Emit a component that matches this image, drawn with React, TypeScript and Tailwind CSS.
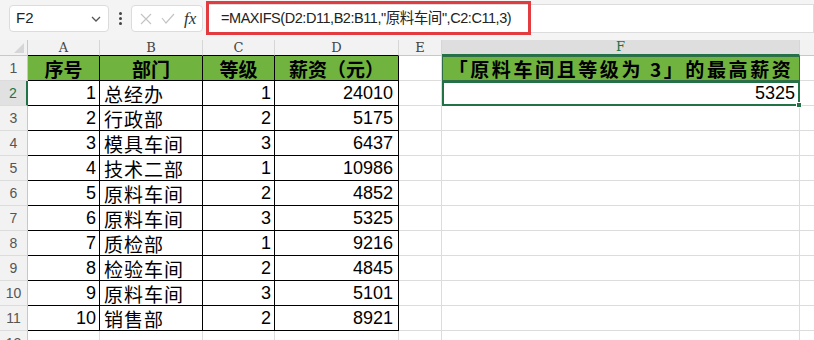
import React from "react";

const rows: [string, string, string, string][] = [
  ["1", "总经办", "1", "24010"],
  ["2", "行政部", "2", "5175"],
  ["3", "模具车间", "3", "6437"],
  ["4", "技术二部", "1", "10986"],
  ["5", "原料车间", "2", "4852"],
  ["6", "原料车间", "3", "5325"],
  ["7", "质检部", "1", "9216"],
  ["8", "检验车间", "2", "4845"],
  ["9", "原料车间", "3", "5101"],
  ["10", "销售部", "2", "8921"],
];

const CJK = { fontFamily: '"Noto Sans CJK SC", "Noto Sans", sans-serif' };
const NUM = { fontFamily: '"Liberation Sans", Arial, sans-serif' };
const HDR = { fontFamily: '"DejaVu Serif", "Liberation Serif", serif' };

function RowHead({ n, active }: { n: number; active?: boolean }) {
  return (
    <div
      className={`h-[25px] flex items-end justify-center pb-[1px] text-[14px] border-b border-[#dcdcdc] ${
        active ? "text-[#217346] bg-[#e1e1e1] border-r-2 border-r-[#217346]" : "text-[#555] bg-[#f2f2f2] border-r border-r-[#c8c8c8]"
      }`}
      style={{ fontFamily: '"Liberation Sans", sans-serif' }}
    >
      {n}
    </div>
  );
}

export default function App() {
  return (
    <div className="w-[814px] h-[340px] overflow-hidden bg-white relative">
      {/* toolbar */}
      <div className="h-[40px] bg-[#f4f4f4] flex items-start relative">
        <div className="ml-[9px] mt-[5px] w-[100px] h-[27px] bg-white border border-[#dcdcdc] rounded-[4px] flex items-center pl-[6px] pr-[6px] justify-between">
          <span className="text-[15px] text-[#222]" style={NUM}>F2</span>
          <svg width="12" height="8" viewBox="0 0 12 8"><path d="M2 2 L6 6 L10 2" fill="none" stroke="#555" strokeWidth="1.3" /></svg>
        </div>
        <div className="w-[22px] h-[37px] flex flex-col items-center justify-center gap-[2px]">
          <div className="w-[3px] h-[3px] rounded-full bg-[#444]" />
          <div className="w-[3px] h-[3px] rounded-full bg-[#444]" />
          <div className="w-[3px] h-[3px] rounded-full bg-[#444]" />
        </div>
        <div className="mt-[5px] w-[72px] h-[27px] bg-white border border-[#dcdcdc] rounded-[4px] flex items-center pl-[8px] gap-[9px]">
          <svg width="12" height="12" viewBox="0 0 12 12"><path d="M1 1 L11 11 M11 1 L1 11" stroke="#c4c4c4" strokeWidth="1.2" /></svg>
          <svg width="14" height="11" viewBox="0 0 14 11"><path d="M1 5 L5 10 L13 1" fill="none" stroke="#c4c4c4" strokeWidth="1.2" /></svg>
          <span className="text-[17px] italic text-[#333] leading-none" style={{ fontFamily: '"Liberation Serif", serif' }}>fx</span>
        </div>
        <div className="ml-[4px] mt-[4px] flex-1 h-[29px] bg-white border border-[#dcdcdc] flex items-center pl-[13px]">
          <span className="text-[14.5px] text-[#222] tracking-[-0.45px]" style={{ fontFamily: '"Liberation Sans", "Noto Sans CJK SC", sans-serif' }}>
            =MAXIFS(D2:D11,B2:B11,"原料车间",C2:C11,3)
          </span>
        </div>
        <div className="absolute left-[206px] top-[1px] w-[325px] h-[34px] border-[3px] border-[#e23c40]" />
      </div>

      {/* sheet */}
      <div className="grid grid-cols-[28px_72px_103px_72px_124px_43px_358px_1fr]">
        {/* column headers */}
        <div className="h-[16px] bg-[#f2f2f2] border-r border-b border-[#c8c8c8] relative">
          <svg className="absolute right-[3px] bottom-[2px]" width="10" height="10" viewBox="0 0 10 10"><path d="M10 0 L10 10 L0 10 Z" fill="#d6d6d6" /></svg>
        </div>
        {["A", "B", "C", "D"].map((c) => (
          <div key={c} className="h-[16px] bg-[#f2f2f2] border-r border-[#d6d6d6] border-b border-b-black flex items-center justify-center text-[13px] text-[#444]" style={HDR}>{c}</div>
        ))}
        <div className="h-[16px] bg-[#f2f2f2] border-r border-[#d6d6d6] border-b border-b-[#c8c8c8] flex items-center justify-center text-[13px] text-[#444]" style={HDR}>E</div>
        <div className="h-[16px] bg-[#dedede] border-r border-[#d6d6d6] border-b-2 border-b-[#217346] flex items-center justify-center text-[13px] text-[#217346]" style={HDR}>F</div>
        <div className="h-[16px] bg-[#f2f2f2] border-b border-[#c8c8c8]" />

        {/* row 1 */}
        <RowHead n={1} />
        {["序号", "部门", "等级", "薪资（元）"].map((t) => (
          <div key={t} className="h-[25px] bg-[#70b33e] border-r border-b border-black flex items-center justify-center text-[19px] font-bold text-black leading-none" style={CJK}>{t}</div>
        ))}
        <div className="h-[25px] border-r border-b border-[#dcdcdc]" />
        <div className="h-[25px] bg-[#70b33e] border border-[#2f6e48] flex items-center justify-center text-[19px] font-bold text-black leading-none tracking-[2.6px]" style={CJK}>「原料车间且等级为 3」的最高薪资</div>
        <div className="h-[25px] border-b border-[#dcdcdc]" />

        {rows.map((r, i) => {
          const n = i + 2;
          return (
            <React.Fragment key={n}>
              <RowHead n={n} active={n === 2} />
              <div className="h-[25px] border-r border-b border-black flex items-center justify-end pr-[3px] text-[18px] text-black" style={NUM}>{r[0]}</div>
              <div className="h-[25px] border-r border-b border-black flex items-center pl-[4px] text-[19px] text-black leading-none tracking-[1px]" style={CJK}>{r[1]}</div>
              <div className="h-[25px] border-r border-b border-black flex items-center justify-end pr-[3px] text-[18px] text-black" style={NUM}>{r[2]}</div>
              <div className="h-[25px] border-r border-b border-black flex items-center justify-end pr-[5px] text-[18px] text-black" style={NUM}>{r[3]}</div>
              <div className="h-[25px] border-r border-b border-[#dcdcdc]" />
              {n === 2 ? (
                <div className="h-[25px] border-2 border-[#217346] flex items-center justify-end pr-[3px] text-[18px] text-black relative" style={NUM}>
                  5325
                  <div className="absolute right-[-4px] bottom-[-4px] w-[6px] h-[6px] bg-[#217346] border border-white" />
                </div>
              ) : (
                <div className="h-[25px] border-r border-b border-[#dcdcdc]" />
              )}
              <div className="h-[25px] border-b border-[#dcdcdc]" />
            </React.Fragment>
          );
        })}

        {/* row 12 */}
        <RowHead n={12} />
        <div className="h-[25px] border-r border-[#dcdcdc]" />
        <div className="h-[25px] border-r border-[#dcdcdc]" />
        <div className="h-[25px] border-r border-[#dcdcdc]" />
        <div className="h-[25px] border-r border-[#dcdcdc]" />
        <div className="h-[25px] border-r border-[#dcdcdc]" />
        <div className="h-[25px] border-r border-[#dcdcdc]" />
        <div className="h-[25px]" />
      </div>
    </div>
  );
}
